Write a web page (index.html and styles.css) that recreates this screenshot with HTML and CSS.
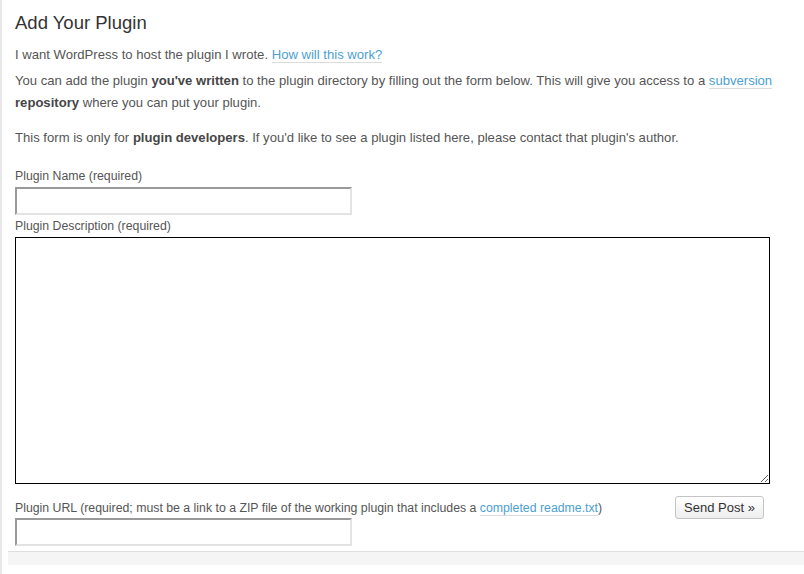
FILE: index.html
```html
<!DOCTYPE html>
<html>
<head>
<meta charset="utf-8">
<title>Add Your Plugin</title>
<link rel="stylesheet" href="styles.css">
</head>
<body>
<div class="page">
  <div class="content">
    <h2 class="title">Add Your Plugin</h2>
    <p class="intro">I want WordPress to host the plugin I wrote. <a href="#">How will this work?</a></p>
    <p class="desc">You can add the plugin <strong>you've written</strong> to the plugin directory by filling out the form below. This will give you access to a <a href="#">subversion</a> <strong>repository</strong> where you can put your plugin.</p>
    <p class="note">This form is only for <strong>plugin developers</strong>. If you'd like to see a plugin listed here, please contact that plugin's author.</p>
    <form class="form">
      <label class="label label-name" for="pname">Plugin Name (required)</label>
      <input class="text-input" id="pname" type="text">
      <label class="label label-desc" for="pdesc">Plugin Description (required)</label>
      <textarea class="text-area" id="pdesc"></textarea>
      <div class="url-row">
        <label class="label" for="purl">Plugin URL (required; must be a link to a ZIP file of the working plugin that includes a <a href="#">completed readme.txt</a>)</label>
        <button class="button" type="button">Send Post &raquo;</button>
      </div>
      <input class="text-input url-input" id="purl" type="text">
    </form>
  </div>
  <div class="footer-strip"></div>
</div>
</body>
</html>
```
FILE: styles.css
```css
html, body {
  margin: 0;
  padding: 0;
  background: #fff;
}
body {
  font-family: "Liberation Sans", Arial, sans-serif;
  font-size: 13.1px;
  color: #555;
}
.page {
  border-left: 2px solid #e8e8e8;
  min-height: 574px;
  box-sizing: border-box;
}
.content {
  padding: 12px 0 0 13px;
}
.title {
  margin: 0;
  font-size: 18.5px;
  font-weight: normal;
  color: #333;
  line-height: 22px;
}
p {
  margin: 0;
  line-height: 22px;
}
.intro {
  margin-top: 10px;
}
.desc {
  margin-top: 4px;
}
.note {
  margin-top: 13px;
}
strong {
  color: #464646;
}
a {
  color: #4d9fd1;
  text-decoration: none;
  border-bottom: 1px solid #dcdcdc;
}
.form {
  margin: 0;
  padding-top: 17px;
}
.label {
  display: block;
  line-height: 20px;
  font-size: 12.3px;
}
.text-input {
  display: block;
  margin: 1px 0 0 0;
  width: 337px;
  height: 28px;
  box-sizing: border-box;
  border-style: solid;
  border-width: 2px;
  border-color: #9a9a9a #e3e3e3 #e3e3e3 #9a9a9a;
  background: #fff;
  padding: 2px 4px;
  font: inherit;
}
.label-desc {
  padding-top: 1px;
}
.text-area {
  display: block;
  margin-top: 1px;
  width: 755px;
  height: 247px;
  box-sizing: border-box;
  border: 1px solid #000;
  background: #fff;
  font: inherit;
  resize: both;
}
.url-row {
  display: flex;
  justify-content: space-between;
  align-items: center;
  width: 749px;
  margin-top: 12px;
}
.button {
  width: 89px;
  height: 23px;
  box-sizing: border-box;
  border: 1px solid #c4c4c4;
  border-radius: 3px;
  background: linear-gradient(#ffffff, #eeeeee);
  color: #333;
  font-family: "Liberation Sans", Arial, sans-serif;
  font-size: 13px;
  padding: 0;
  margin: 0;
}
.url-input {
  margin-top: -1px;
}
.footer-strip {
  margin: 5px 0 0 6px;
  height: 13px;
  border-top: 1px solid #dedede;
  background: #f5f5f5;
}
```
